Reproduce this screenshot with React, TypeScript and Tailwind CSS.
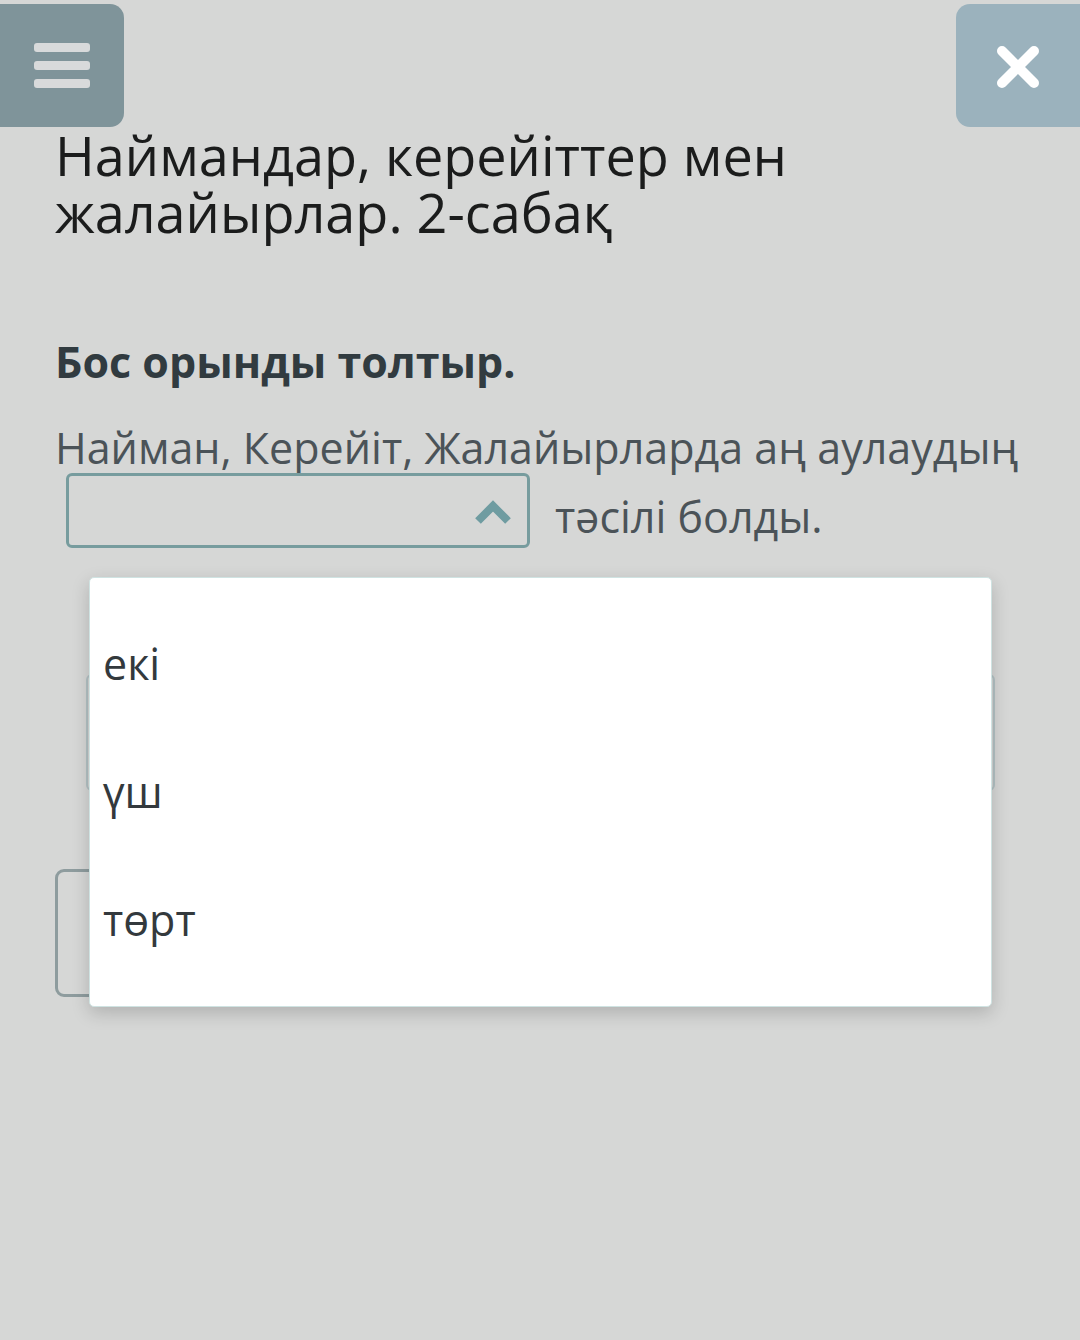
const options = ['екі', 'үш', 'төрт'];

export default function App() {
  return (
    <div
      className="relative w-[1080px] h-[1340px] overflow-hidden bg-[#d6d7d6]"
      style={{ fontFamily: '"Open Sans", "Noto Sans", sans-serif' }}
    >
      {/* top bar */}
      <div className="flex justify-between pt-[4px]">
        <button className="flex h-[123px] w-[124px] flex-col items-center justify-center gap-[9px] rounded-r-[14px] bg-[#7f949a]">
          <span className="block h-[9px] w-[56px] rounded-[3px] bg-[#d8dadb]" />
          <span className="block h-[9px] w-[56px] rounded-[3px] bg-[#d8dadb]" />
          <span className="block h-[9px] w-[56px] rounded-[3px] bg-[#d8dadb]" />
        </button>
        <button className="flex h-[123px] w-[124px] items-center justify-center rounded-l-[14px] bg-[#9bb2bd]">
          <svg width="46" height="46" viewBox="0 0 46 46" className="mt-[3px]">
            <path d="M7 7L39 39M39 7L7 39" stroke="#ffffff" strokeWidth="10" strokeLinecap="round" />
          </svg>
        </button>
      </div>

      <main className="px-[55px]">
        <h1 className="text-[54px] leading-[57px] font-normal text-[#1b1c1c]">
          Наймандар, керейіттер мен
          <br />
          жалайырлар. 2-сабақ
        </h1>

        <h2 className="mt-[95px] text-[43px] leading-[52px] font-bold text-[#313b40]">Бос орынды толтыр.</h2>

        <div className="mt-[31px] text-[43px] text-[#4b5358]">
          <p className="leading-[58px]">Найман, Керейіт, Жалайырларда аң аулаудың</p>
          <div className="mt-[-4px] flex items-start">
            <div className="ml-[11px] flex h-[75px] w-[464px] items-center justify-end rounded-[6px] border-[3px] border-[#779c9e] pr-[14px]">
              <svg width="40" height="28" viewBox="0 0 40 28" className="mt-[2px]">
                <path d="M5 23L20 8L35 23" fill="none" stroke="#6f9ca1" strokeWidth="8" strokeLinejoin="miter" />
              </svg>
            </div>
            <span className="ml-[25px] mt-[15px] leading-[58px]">тәсілі болды.</span>
          </div>
        </div>

        {/* content behind the open list */}
        <div className="mt-[126px] ml-[31px] h-[117px] w-[909px] rounded-[6px] border-2 border-[#b3c2c4]" />
        <div className="mt-[78px] h-[128px] w-[400px] rounded-[9px] border-[3px] border-[#8e9c9e]" />
      </main>

      {/* open dropdown list */}
      <ul className="absolute left-[89px] top-[577px] w-[903px] rounded-[5px] border border-[#cfe3e2] bg-white pt-[22px] pb-[22px] shadow-[0_6px_18px_rgba(0,0,0,0.18)]">
        {options.map((o) => (
          <li key={o} className="flex h-[128px] items-center pl-[13px] text-[43px] text-[#33393d]">
            {o}
          </li>
        ))}
      </ul>
    </div>
  );
}
